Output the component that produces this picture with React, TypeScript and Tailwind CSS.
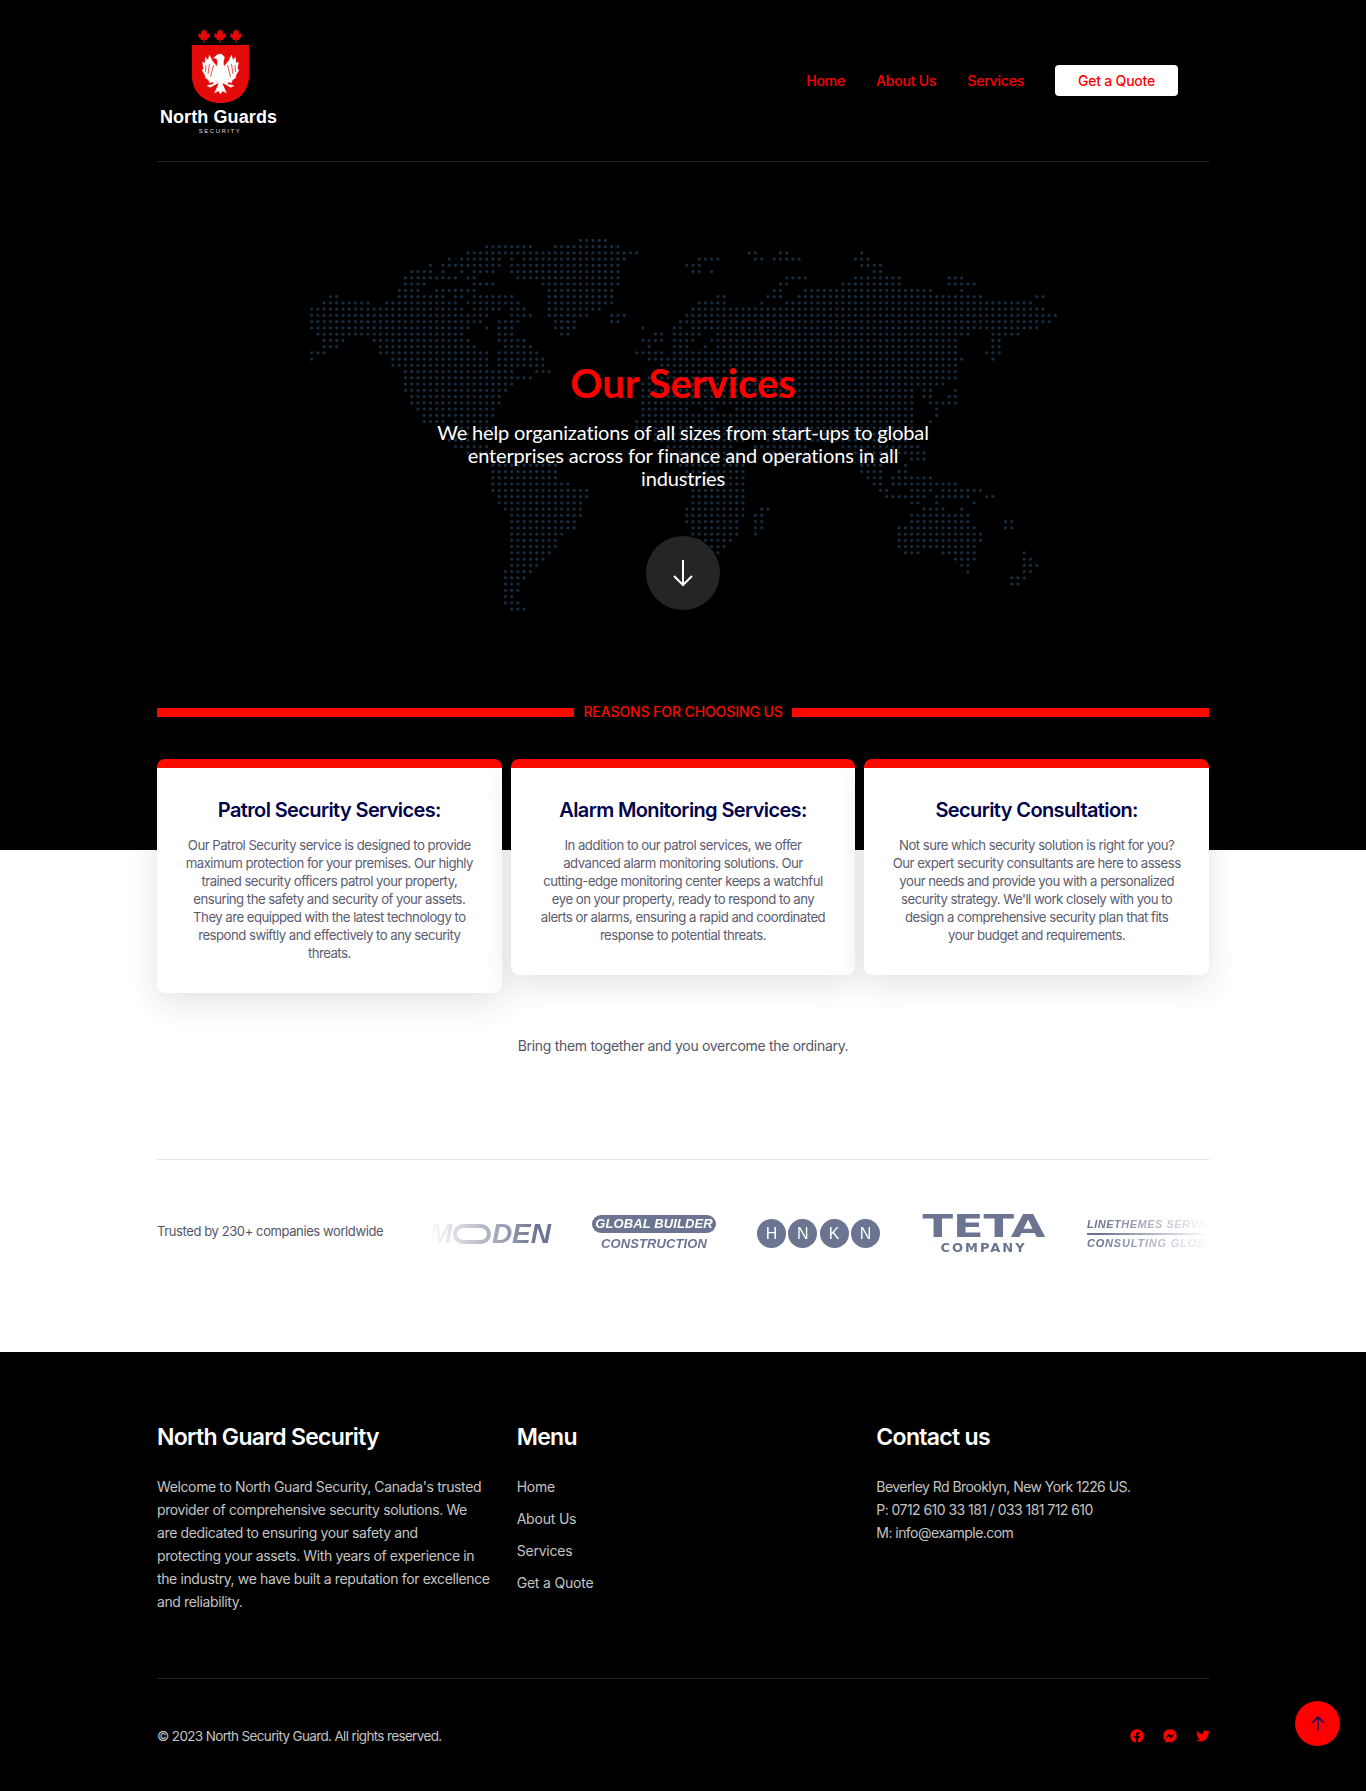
import React, { FC } from "react";
import { RiFacebookCircleFill, RiMessengerFill, RiTwitterFill } from "react-icons/ri";

// dot map: row by row, pairs of [from, to] columns
const MAP_LEFT: number[][] = [
    [45, 49],
    [30, 37, 41, 51],
    [27, 54],
    [24, 24, 26, 32, 34, 34, 36, 52],
    [21, 21, 23, 25, 26, 32, 34, 51],
    [18, 21, 23, 23, 26, 26, 28, 31, 34, 51],
    [17, 25, 27, 28, 35, 51],
    [17, 19, 20, 20, 28, 31, 39, 51],
    [16, 19, 22, 28, 40, 50],
    [5, 6, 16, 23, 25, 26, 28, 34, 40, 50],
    [4, 11, 14, 25, 27, 35, 40, 50],
    [2, 26, 28, 31, 32, 32, 34, 36, 40, 48],
    [2, 30, 34, 37, 40, 46, 50, 52],
    [2, 29, 32, 34, 35, 35, 41, 44, 50, 51],
    [2, 27, 30, 30, 32, 34, 41, 44],
    [3, 26, 32, 34, 42, 43],
    [4, 7, 12, 27, 32, 36],
    [4, 6, 13, 28, 33, 37],
    [2, 4, 13, 30, 32, 38],
    [2, 2, 15, 30, 32, 39],
    [15, 30, 32, 39],
    [17, 34, 38, 40],
    [17, 37],
    [17, 34],
    [17, 33],
    [18, 32],
    [18, 32],
    [19, 31],
    [20, 31],
    [20, 23, 25, 30],
    [24, 31],
    [26, 32],
    [24, 28],
    [25, 30],
    [27, 30],
    [30, 33],
    [31, 41],
    [31, 41],
    [31, 41],
    [31, 43],
    [31, 46],
    [32, 46],
    [32, 45],
    [33, 45],
    [34, 45],
    [34, 44],
    [34, 44],
    [34, 42],
    [34, 41],
    [34, 41],
    [34, 40],
    [34, 39],
    [34, 38],
    [33, 37],
    [33, 36],
    [33, 35],
    [33, 35],
    [33, 34],
    [33, 35],
    [34, 36],
];

const MAP_RIGHT: number[][] = [
    [],
    [],
    [11, 12, 16, 17, 29, 29],
    [3, 6, 12, 13, 15, 19, 28, 30],
    [1, 3, 29, 32],
    [2, 3, 5, 5, 31, 32],
    [17, 20, 28, 35, 43, 45],
    [16, 17, 26, 35, 43, 47],
    [15, 16, 20, 40, 45, 45],
    [6, 7, 14, 16, 19, 48, 57, 58],
    [3, 7, 13, 13, 17, 56],
    [2, 58],
    [1, 60],
    [0, 59],
    [-6, -6, -1, 0, 2, 57],
    [-4, -3, -1, 3, 6, 46, 50, 54],
    [-6, -3, -1, 2, 5, 44, 50, 51],
    [-5, -5, -1, 1, 4, 4, 6, 44, 50, 51],
    [-7, -3, -1, 44, 49, 51],
    [-5, -3, -2, 45, 50, 50],
    [-3, 44],
    [-4, 44],
    [-5, 44],
    [-6, 42],
    [-6, 37, 39, 40, 44, 44],
    [-6, 37, 39, 40, 43, 44],
    [-6, 37, 40, 44],
    [-6, 1, 4, 5, 9, 37, 41, 41],
    [-6, 37, 41, 41],
    [-7, 37, 40, 40],
    [-7, 37],
    [-6, 36],
    [-4, 10, 14, 36],
    [-2, 8, 12, 20, 26, 38],
    [0, 9, 14, 20, 28, 39],
    [0, 9, 16, 19, 29, 32, 37, 39],
    [0, 10, 29, 32, 36, 36],
    [1, 10, 29, 32, 35, 36],
    [1, 10, 30, 32, 34, 40],
    [2, 10, 31, 32, 34, 44],
    [2, 10, 32, 33, 37, 40, 42, 48],
    [2, 10, 33, 39, 41, 46, 49, 50],
    [2, 10, 37, 38, 41, 41, 47, 47],
    [1, 10, 13, 14, 39, 42, 45, 45],
    [1, 10, 12, 13, 37, 46],
    [1, 9, 12, 13, 37, 46, 52, 53],
    [2, 9, 12, 13, 35, 47, 52, 53],
    [2, 9, 12, 12, 35, 48],
    [3, 8, 35, 48],
    [4, 7, 35, 47],
    [5, 6, 36, 38, 42, 47, 55, 55],
    [44, 47, 55, 56],
    [45, 46, 55, 57],
    [46, 46, 55, 56],
    [53, 55],
    [53, 54],
];

const mapPath = () => {
    let d = "";
    const addRow = (spans: number[], r: number, offset: number) => {
        for (let i = 0; i < spans.length; i += 2) {
            for (let c = spans[i]; c <= spans[i + 1]; c++) {
                d += `M${(-0.8 + 6.25 * (c + offset)).toFixed(2)} ${(5.3 + 6.25 * r).toFixed(2)}h0`;
            }
        }
    };
    MAP_LEFT.forEach((spans, r) => addRow(spans, r, 0));
    MAP_RIGHT.forEach((spans, r) => addRow(spans, r, 61));
    return d;
};

const NAV_LINKS = ["Home", "About Us", "Services"];
const MENU_LINKS = ["Home", "About Us", "Services", "Get a Quote"];

const CARDS = [
    {
        title: "Patrol Security Services:",
        lines: [
            "Our Patrol Security service is designed to provide",
            "maximum protection for your premises. Our highly",
            "trained security officers patrol your property,",
            "ensuring the safety and security of your assets.",
            "They are equipped with the latest technology to",
            "respond swiftly and effectively to any security",
            "threats.",
        ],
    },
    {
        title: "Alarm Monitoring Services:",
        lines: [
            "In addition to our patrol services, we offer",
            "advanced alarm monitoring solutions. Our",
            "cutting-edge monitoring center keeps a watchful",
            "eye on your property, ready to respond to any",
            "alerts or alarms, ensuring a rapid and coordinated",
            "response to potential threats.",
        ],
    },
    {
        title: "Security Consultation:",
        lines: [
            "Not sure which security solution is right for you?",
            "Our expert security consultants are here to assess",
            "your needs and provide you with a personalized",
            "security strategy. We'll work closely with you to",
            "design a comprehensive security plan that fits",
            "your budget and requirements.",
        ],
    },
];

const ABOUT_LINES = [
    "Welcome to North Guard Security, Canada's trusted",
    "provider of comprehensive security solutions. We",
    "are dedicated to ensuring your safety and",
    "protecting your assets. With years of experience in",
    "the industry, we have built a reputation for excellence",
    "and reliability.",
];

const LEAF = "0,-6.5 1.5,-4 3,-4.6 2.6,-1.2 5.6,-2.6 5,-0.4 6.4,0.6 3,3.2 3.6,4.6 0.5,4.2 0.5,7.5 -0.5,7.5 -0.5,4.2 -3.6,4.6 -3,3.2 -6.4,0.6 -5,-0.4 -5.6,-2.6 -2.6,-1.2 -3,-4.6 -1.5,-4";
const WING = "3,-7 8,-13 11,-19 12.5,-14 15,-17 15.5,-11 18,-12 17,-5 18.5,-4 15,2 15.5,3.5 12,6 11,9 8,8 6,11 3,6";

const Logo: FC = () => (
    <div className="flex w-[127px] flex-col items-center">
        <svg width="57" height="76" viewBox="0 0 57 76">
            {[12, 28, 44].map((x) => (
                <polygon key={x} points={LEAF} transform={`translate(${x} 6.5)`} fill="#e30a0a" />
            ))}
            <path d="M0 16H57V47C57 64 44 74 28.5 74C13 74 0 64 0 47Z" fill="#e30a0a" />
            <g transform="translate(28.5 45)" fill="#fff" stroke="#fff" strokeWidth="0.3">
                <polygon points="-7,-16 -3,-19.5 1,-20 4,-17 3,-12 3.5,-6 -3.5,-6 -3,-13 -4,-15.5" />
                <polygon points="-4,-8 4,-8 3.5,8 0,12 -3.5,8" />
                <polygon points={WING} />
                <polygon points={WING} transform="scale(-1 1)" />
                <polygon points="-2,10 2,10 6,19 2,17 0,20 -2,17 -6,19" />
                <path d="M2 8L11 13M-2 8L-11 13M8 11L13 12M-8 11L-13 12" strokeWidth="1.6" fill="none" />
                <path d="M7 -9L10 3M11 -10L12.5 0M14.5 -9L15 -2M-7 -9L-10 3M-11 -10L-12.5 0M-14.5 -9L-15 -2" stroke="#e30a0a" strokeWidth="0.7" fill="none" />
            </g>
        </svg>
        <span className="mt-[1px] mr-[4px] font-['Liberation_Sans'] text-[18px] leading-[22px] font-bold tracking-[0.1px] whitespace-nowrap text-white">North Guards</span>
        <span className="mr-[1px] font-['Liberation_Sans'] text-[6px] leading-[7px] tracking-[1.5px] text-[#ddd]">SECURITY</span>
    </div>
);

const LogoStrip: FC = () => (
    <div className="flex w-[780px] items-center gap-[41px] overflow-hidden font-['Liberation_Sans'] text-[#6b7491] [mask-image:linear-gradient(to_right,transparent,black_14%,black_86%,transparent)]">
        <div className="flex h-[37px] w-[122px] shrink-0 items-center justify-center gap-[1px] text-[28px] font-bold italic">
            <span>M</span>
            <span className="h-[20px] w-[40px] rounded-full border-[4px] border-[#6b7491]"></span>
            <span>DEN</span>
        </div>
        <div className="flex w-[124px] shrink-0 flex-col items-center font-bold italic">
            <span className="w-full rounded-[9px] bg-[#6b7491] text-center text-[13px] leading-[18px] tracking-[0.1px] text-white">GLOBAL BUILDER</span>
            <span className="mt-[2px] text-[13px] leading-[17px] tracking-[0.1px]">CONSTRUCTION</span>
        </div>
        <div className="flex w-[123px] shrink-0 justify-between">
            {["H", "N", "K", "N"].map((letter, i) => (
                <span key={i} className="flex h-[29px] w-[29px] items-center justify-center rounded-full bg-[#6b7491] text-[16px] text-white">{letter}</span>
            ))}
        </div>
        <div className="flex w-[125px] shrink-0 flex-col items-center font-['DejaVu_Sans'] font-bold">
            <span className="-my-[2px] inline-block scale-x-[1.4] text-[32px] leading-[30px]">TETA</span>
            <span className="mt-[2px] text-[13px] leading-[13px] tracking-[2px]">COMPANY</span>
        </div>
        <div className="flex w-[134px] shrink-0 flex-col font-bold italic whitespace-nowrap">
            <span className="text-[11px] leading-[13px] tracking-[0.5px]">LINETHEMES SERVICES</span>
            <span className="my-[2px] h-[2px] bg-[#6b7491]"></span>
            <span className="text-[11px] leading-[13px] tracking-[0.8px]">CONSULTING GLOBAL</span>
        </div>
    </div>
);

const App: FC = () => {
    return (
        <div className="relative bg-white font-['Inter',sans-serif]">
            <section className="relative bg-black">
                <header className="mx-auto flex h-[162px] w-[1052px] items-center justify-between border-b border-[#262626] pt-[2px]">
                    <Logo />
                    <nav className="mr-[31px] mb-[2px] flex items-center text-[14px] font-medium tracking-[-0.2px] text-[#f00]">
                        {NAV_LINKS.map((link) => (
                            <a key={link} href="#" className="mr-[31px]">{link}</a>
                        ))}
                        <a href="#" className="flex h-[31px] w-[123px] items-center justify-center rounded-[4px] bg-white">Get a Quote</a>
                    </nav>
                </header>

                <svg className="absolute top-[235px] left-[300px] h-[380px] w-[766px]" viewBox="0 0 766 380">
                    <path d={mapPath()} stroke="#182c40" strokeWidth="3.3" strokeLinecap="round" fill="none" />
                </svg>

                <div className="relative mx-auto flex w-[1052px] flex-col items-center pt-[197px] pb-[128px]">
                    <h1 className="font-['Lato'] text-[40px] leading-[48px] font-bold text-[#f00]">Our Services</h1>
                    <p className="mt-[14px] w-[505px] text-center font-['Lato'] text-[20px] leading-[23px] tracking-[-0.15px] text-white">We help organizations of all sizes from start-ups to global enterprises across for finance and operations in all industries</p>
                    <a href="#" className="mt-[46px] flex h-[74px] w-[74px] items-center justify-center rounded-full bg-[#252525]">
                        <svg width="22" height="28" viewBox="0 0 22 28" fill="none" stroke="#fff" strokeWidth="2">
                            <path d="M11 1V26M2 17L11 26L20 17" />
                        </svg>
                    </a>
                    <div className="mt-[92px] flex w-full items-center gap-[9px]">
                        <span className="h-[9px] flex-1 bg-[#f80b00]"></span>
                        <span className="text-[14px] leading-[20px] font-medium tracking-[-0.1px] text-[#f80b00] uppercase">Reasons for choosing us</span>
                        <span className="h-[9px] flex-1 bg-[#f80b00]"></span>
                    </div>
                </div>
            </section>

            <section className="relative">
                <div className="mx-auto -mt-[91px] grid w-[1052px] grid-cols-3 items-start gap-[9px]">
                    {CARDS.map((card) => (
                        <div key={card.title} className="rounded-[8px] border-t-[9px] border-[#f80b00] bg-white px-[24px] pt-[28px] pb-[31px] text-center shadow-[0_10px_30px_rgba(30,30,60,0.12)]">
                            <h3 className="text-[20px] leading-[28px] font-semibold tracking-[-0.62px] text-[#02024a]">{card.title}</h3>
                            <p className="mt-[12px] text-[13.2px] leading-[18px] tracking-[-0.52px] text-[#5c5c70]">
                                {card.lines.map((line) => (
                                    <span key={line} className="block whitespace-nowrap">{line}</span>
                                ))}
                            </p>
                        </div>
                    ))}
                </div>
                <p className="mt-[43px] text-center text-[14px] leading-[20px] tracking-[-0.3px] text-[#555566]">Bring them together and you overcome the ordinary.</p>
                <div className="mx-auto mt-[103px] w-[1052px] border-t border-[#e5e5e5]">
                    <div className="flex h-[192px] items-start justify-between pt-[53px]">
                        <span className="mt-[9px] text-[13px] leading-[18px] tracking-[-0.4px] text-[#555566]">Trusted by 230+ companies worldwide</span>
                        <LogoStrip />
                    </div>
                </div>
            </section>

            <footer className="bg-black">
                <div className="mx-auto w-[1052px] pt-[69px]">
                    <div className="grid h-[258px] grid-cols-3 gap-[27px] border-b border-[#262626]">
                        <div>
                            <h4 className="text-[23px] leading-[32px] font-semibold tracking-[-0.7px] text-white">North Guard Security</h4>
                            <p className="mt-[22px] text-[14px] leading-[23px] tracking-[-0.38px] text-[#c4c4c4]">
                                {ABOUT_LINES.map((line) => (
                                    <span key={line} className="block whitespace-nowrap">{line}</span>
                                ))}
                            </p>
                        </div>
                        <div>
                            <h4 className="text-[23px] leading-[32px] font-semibold tracking-[-0.7px] text-white">Menu</h4>
                            <ul className="mt-[22px] flex flex-col gap-[9px] text-[14px] leading-[23px] tracking-[-0.2px] text-[#c4c4c4]">
                                {MENU_LINKS.map((link) => (
                                    <li key={link}><a href="#">{link}</a></li>
                                ))}
                            </ul>
                        </div>
                        <div>
                            <h4 className="text-[23px] leading-[32px] font-semibold tracking-[-0.7px] text-white">Contact us</h4>
                            <p className="mt-[22px] text-[14px] leading-[23px] tracking-[-0.55px] text-[#c4c4c4]">
                                Beverley Rd Brooklyn, New York 1226 US.<br />
                                P: 0712 610 33 181 / 033 181 712 610<br />
                                M: info@example.com
                            </p>
                        </div>
                    </div>
                    <div className="flex h-[115px] items-center justify-between pb-[1px]">
                        <span className="text-[13.5px] tracking-[-0.65px] text-[#c4c4c4]">© 2023 North Security Guard. All rights reserved.</span>
                        <div className="-mr-[2px] flex gap-[17px] text-[#f00]">
                            <RiFacebookCircleFill size={16} />
                            <RiMessengerFill size={16} />
                            <RiTwitterFill size={16} />
                        </div>
                    </div>
                </div>
            </footer>

            <a href="#" className="fixed right-[26px] bottom-[45px] flex h-[45px] w-[45px] items-center justify-center rounded-full bg-[#f00]">
                <svg width="14" height="16" viewBox="0 0 14 16" fill="none" stroke="#1b0a5c" strokeWidth="1.6">
                    <path d="M7 15V1M1 7L7 1L13 7" />
                </svg>
            </a>
        </div>
    );
};

export default App;
